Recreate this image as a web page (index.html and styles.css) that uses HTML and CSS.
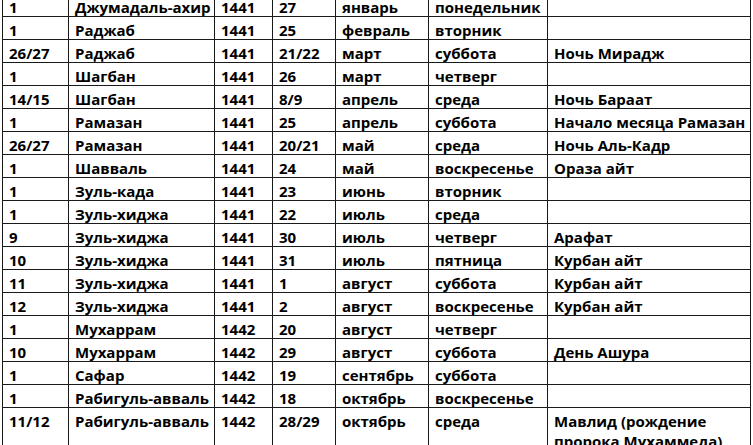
FILE: index.html
```html
<!DOCTYPE html>
<html lang="ru">
<head>
<meta charset="utf-8">
<link rel="stylesheet" href="styles.css">
</head>
<body>
<table class="cal">
<colgroup>
<col class="c1"><col class="c2"><col class="c3"><col class="c4"><col class="c5"><col class="c6"><col class="c7">
</colgroup>
<tbody>
<tr><td>1</td><td>Джумадаль-ахир</td><td>1441</td><td>27</td><td>январь</td><td class="ovf">понедельник</td><td></td></tr>
<tr><td>1</td><td>Раджаб</td><td>1441</td><td>25</td><td>февраль</td><td>вторник</td><td></td></tr>
<tr><td>26/27</td><td>Раджаб</td><td>1441</td><td>21/22</td><td>март</td><td>суббота</td><td>Ночь Мирадж</td></tr>
<tr><td>1</td><td>Шагбан</td><td>1441</td><td>26</td><td>март</td><td>четверг</td><td></td></tr>
<tr><td>14/15</td><td>Шагбан</td><td>1441</td><td>8/9</td><td>апрель</td><td>среда</td><td>Ночь Бараат</td></tr>
<tr><td>1</td><td>Рамазан</td><td>1441</td><td>25</td><td>апрель</td><td>суббота</td><td>Начало месяца Рамазан</td></tr>
<tr><td>26/27</td><td>Рамазан</td><td>1441</td><td>20/21</td><td>май</td><td>среда</td><td>Ночь Аль-Кадр</td></tr>
<tr><td>1</td><td>Шавваль</td><td>1441</td><td>24</td><td>май</td><td>воскресенье</td><td>Ораза айт</td></tr>
<tr><td>1</td><td>Зуль-када</td><td>1441</td><td>23</td><td>июнь</td><td>вторник</td><td></td></tr>
<tr><td>1</td><td>Зуль-хиджа</td><td>1441</td><td>22</td><td>июль</td><td>среда</td><td></td></tr>
<tr><td>9</td><td>Зуль-хиджа</td><td>1441</td><td>30</td><td>июль</td><td>четверг</td><td>Арафат</td></tr>
<tr><td>10</td><td>Зуль-хиджа</td><td>1441</td><td>31</td><td>июль</td><td>пятница</td><td>Курбан айт</td></tr>
<tr><td>11</td><td>Зуль-хиджа</td><td>1441</td><td>1</td><td>август</td><td>суббота</td><td>Курбан айт</td></tr>
<tr><td>12</td><td>Зуль-хиджа</td><td>1441</td><td>2</td><td>август</td><td>воскресенье</td><td>Курбан айт</td></tr>
<tr><td>1</td><td>Мухаррам</td><td>1442</td><td>20</td><td>август</td><td>четверг</td><td></td></tr>
<tr><td>10</td><td>Мухаррам</td><td>1442</td><td>29</td><td>август</td><td>суббота</td><td>День Ашура</td></tr>
<tr><td>1</td><td>Сафар</td><td>1442</td><td>19</td><td>сентябрь</td><td>суббота</td><td></td></tr>
<tr><td>1</td><td>Рабигуль-авваль</td><td>1442</td><td>18</td><td>октябрь</td><td>воскресенье</td><td></td></tr>
<tr class="tall"><td>11/12</td><td>Рабигуль-авваль</td><td>1442</td><td>28/29</td><td>октябрь</td><td>среда</td><td class="wrap">Мавлид (рождение пророка Мухаммеда)</td></tr>
</tbody>
</table>
</body>
</html>
```
FILE: styles.css
```css
html, body {
  margin: 0;
  padding: 0;
  background: #ffffff;
  overflow: hidden;
}
.cal {
  border-collapse: collapse;
  table-layout: fixed;
  width: 748px;
  margin: -7px 0 0 2px;
  font-family: "Open Sans", "Noto Sans", sans-serif;
  font-weight: 700;
  font-size: 15px;
  color: #000;
}
.c1 { width: 66px; }
.c2 { width: 146px; }
.c3 { width: 58px; }
.c4 { width: 63px; }
.c5 { width: 93px; }
.c6 { width: 119px; }
.c7 { width: 203px; }
.cal td {
  border: 1px solid #1a1a1a;
  height: 23px;
  padding: 4px 0 0 6px;
  box-sizing: border-box;
  vertical-align: top;
  line-height: 18px;
  white-space: nowrap;
  overflow: visible;
}
.cal .tall td {
  height: 60px;
}
.cal td.wrap {
  white-space: normal;
  line-height: 20px;
  padding-top: 3px;
}
```
